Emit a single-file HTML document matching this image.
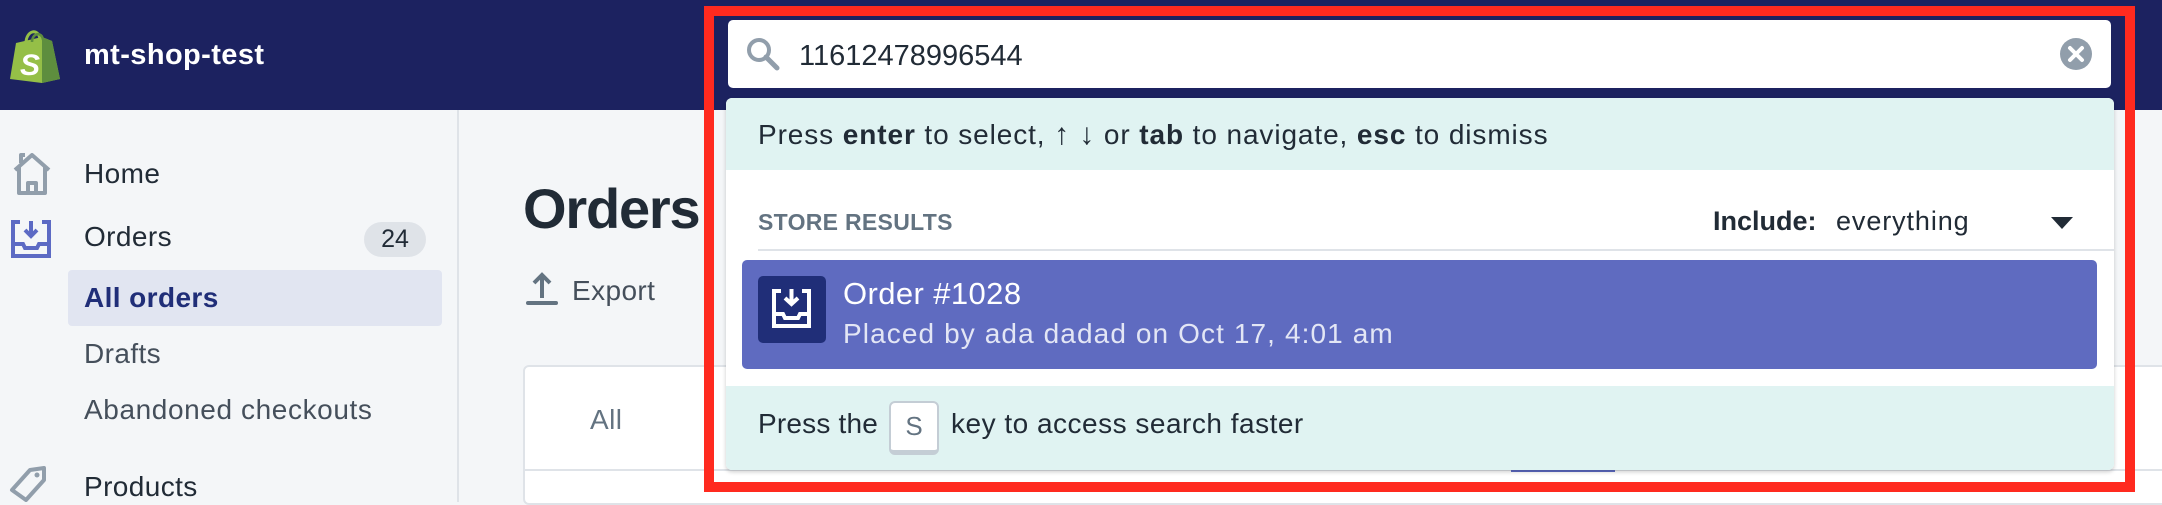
<!DOCTYPE html>
<html><head><meta charset="utf-8"><style>
*{margin:0;padding:0;box-sizing:border-box}
body{width:2162px;height:502px;overflow:hidden;background:#f4f6f8;font-family:"Liberation Sans",sans-serif;position:relative;color:#212b36}
.a{position:absolute;white-space:nowrap}
.hdr{left:0;top:0;width:2162px;height:110px;background:#1c2260}
.side{left:0;top:110px;width:459px;height:392px;background:#f4f6f8;border-right:2px solid #dfe3e8}
.nav{font-size:28px;line-height:34px;letter-spacing:.4px}
.t{line-height:1}
</style></head><body>
<div class="a hdr"></div>
<svg class="a" style="left:8px;top:25px" width="54" height="58" viewBox="0 0 54 58">
<path d="M8 18 L34 12 L44 16 L52 54 L34 58 L2 54 Z" fill="#95bf47"/>
<path d="M34 12 L44 16 L52 54 L34 58 Z" fill="#5e8e3e"/>
<path d="M18 18 C18 6 30 2 32 14" stroke="#95bf47" stroke-width="3" fill="none"/>
<path d="M24 17 C24 8 34 6 35 15" stroke="#5e8e3e" stroke-width="2.5" fill="none"/>
<text x="12" y="50" font-family="Liberation Sans" font-weight="bold" font-style="italic" font-size="30" fill="#fff">S</text>
</svg>
<div class="a t" style="left:84px;top:41px;font-size:29px;color:#fff;font-weight:600;letter-spacing:.4px">mt-shop-test</div>

<div class="a side"></div>
<svg class="a" style="left:12px;top:153px" width="42" height="42" viewBox="0 0 42 42"><path d="M3 17 L20 2 L37 17 M7 14 V40 H33 V14 M16 40 V30 H24 V40 M9 10 V2 H13" stroke="#919eab" stroke-width="4" fill="none" stroke-linejoin="round"/></svg>
<div class="a nav" style="left:84px;top:157px">Home</div>
<svg class="a" style="left:10px;top:219px" width="42" height="40" viewBox="0 0 42 40"><path d="M10 3 H3 V37 H39 V3 H32 M3 25 H13 L15 29 H27 L29 25 H39 M21 2 V17 M15 11 L21 17 L27 11" stroke="#5c6ac4" stroke-width="4" fill="none"/></svg>
<div class="a nav" style="left:84px;top:220px">Orders</div>
<div class="a" style="left:364px;top:222px;width:62px;height:35px;border-radius:18px;background:#dfe3e8;font-size:25px;line-height:35px;text-align:center">24</div>
<div class="a" style="left:68px;top:270px;width:374px;height:56px;border-radius:4px;background:#e1e5f1"></div>
<div class="a nav" style="left:84px;top:281px;color:#202e78;font-weight:600">All orders</div>
<div class="a nav" style="left:84px;top:337px;color:#454f5b">Drafts</div>
<div class="a nav" style="left:84px;top:393px;color:#454f5b;letter-spacing:.6px">Abandoned checkouts</div>
<svg class="a" style="left:8px;top:464px" width="42" height="38" viewBox="0 0 42 38"><path d="M4 26 L22 6 L36 4 L36 16 L18 36 Z" stroke="#919eab" stroke-width="4" fill="none" stroke-linejoin="round"/><circle cx="29" cy="11" r="2.5" fill="#919eab"/></svg>
<div class="a nav" style="left:84px;top:470px">Products</div>

<div class="a t" style="left:523px;top:181px;font-size:56px;font-weight:bold;letter-spacing:-1.2px">Orders</div>
<svg class="a" style="left:526px;top:272px" width="32" height="34" viewBox="0 0 32 34"><path d="M16 26 V4 M8 11 L16 3 L24 11" stroke="#637381" stroke-width="4" fill="none"/><path d="M2 31 H30" stroke="#637381" stroke-width="4" stroke-linecap="round"/></svg>
<div class="a nav" style="left:572px;top:274px;color:#454f5b">Export</div>
<div class="a" style="left:523px;top:365px;width:1650px;height:140px;background:#fff;border:2px solid #dfe3e8;border-radius:6px"></div>
<div class="a" style="left:523px;top:469px;width:1650px;height:2px;background:#dfe3e8"></div>
<div class="a nav" style="left:590px;top:403px;color:#637381">All</div>
<div class="a" style="left:1511px;top:468px;width:104px;height:4px;background:#5c6ac4"></div>

<div class="a" style="left:728px;top:20px;width:1383px;height:68px;background:#fff;border-radius:5px"></div>
<svg class="a" style="left:746px;top:37px" width="36" height="34" viewBox="0 0 36 34"><circle cx="13" cy="13" r="10" stroke="#919eab" stroke-width="4" fill="none"/><path d="M20 20 L31 31" stroke="#919eab" stroke-width="5" stroke-linecap="round"/></svg>
<div class="a t" style="left:799px;top:42px;font-size:29px;letter-spacing:0">11612478996544</div>
<svg class="a" style="left:2059px;top:38px" width="34" height="32" viewBox="0 0 34 32"><ellipse cx="17" cy="16" rx="16" ry="16" fill="#919eab"/><path d="M11 10 L23 22 M23 10 L11 22" stroke="#fff" stroke-width="4" stroke-linecap="round"/></svg>

<div class="a" style="left:726px;top:98px;width:1388px;height:372px;background:#fff;border-radius:6px;box-shadow:0 2px 4px rgba(0,0,0,.2);overflow:hidden">
<div class="a" style="left:0;top:0;width:100%;height:72px;background:#e0f3f2"></div>
<div class="a" style="left:0;top:288px;width:100%;height:84px;background:#e0f3f2"></div>
</div>
<div class="a t" style="left:758px;top:120px;font-size:28px;letter-spacing:.9px">Press <b>enter</b> to select, <b style="font-size:30px">↑ ↓</b> or <b>tab</b> to navigate, <b>esc</b> to dismiss</div>
<div class="a t" style="left:758px;top:211px;font-size:23px;font-weight:bold;color:#637381;letter-spacing:.3px">STORE RESULTS</div>
<div class="a t" style="left:1713px;top:208px;font-size:27px"><b>Include:</b></div>
<div class="a t" style="left:1836px;top:208px;font-size:27px;letter-spacing:.9px">everything</div>
<svg class="a" style="left:2051px;top:217px" width="22" height="12" viewBox="0 0 22 12"><path d="M0 0 H22 L11 12 Z" fill="#212b36"/></svg>
<div class="a" style="left:758px;top:249px;width:1356px;height:2px;background:#dfe3e8"></div>
<div class="a" style="left:742px;top:260px;width:1355px;height:109px;background:#5f6bc0;border-radius:5px"></div>
<div class="a" style="left:758px;top:276px;width:68px;height:67px;background:#202e78;border-radius:5px"></div>
<svg class="a" style="left:771px;top:288px" width="42" height="42" viewBox="0 0 42 42"><path d="M10 3 H3 V38 H38 V3 H31 M3 26 H12 L14 30 H27 L29 26 H38 M20.5 1 V16 M14 10 L20.5 16 L27 10" stroke="#fff" stroke-width="4" fill="none"/></svg>
<div class="a t" style="left:843px;top:278px;font-size:31px;color:#fff;letter-spacing:.4px">Order #1028</div>
<div class="a t" style="left:843px;top:320px;font-size:28px;color:#e3e6f5;letter-spacing:1.1px">Placed by ada dadad on Oct 17, 4:01 am</div>
<div class="a t" style="left:758px;top:410px;font-size:28px;letter-spacing:.2px">Press the</div>
<div class="a" style="left:889px;top:401px;width:50px;height:54px;background:#fff;border:2px solid #c4cdd5;border-bottom-width:5px;border-radius:6px;font-size:26px;color:#637381;text-align:center;line-height:46px">S</div>
<div class="a t" style="left:951px;top:410px;font-size:28px;letter-spacing:.5px">key to access search faster</div>

<div class="a" style="left:704px;top:6px;width:1431px;height:486px;border:10px solid #ff2a1f"></div>
</body></html>
